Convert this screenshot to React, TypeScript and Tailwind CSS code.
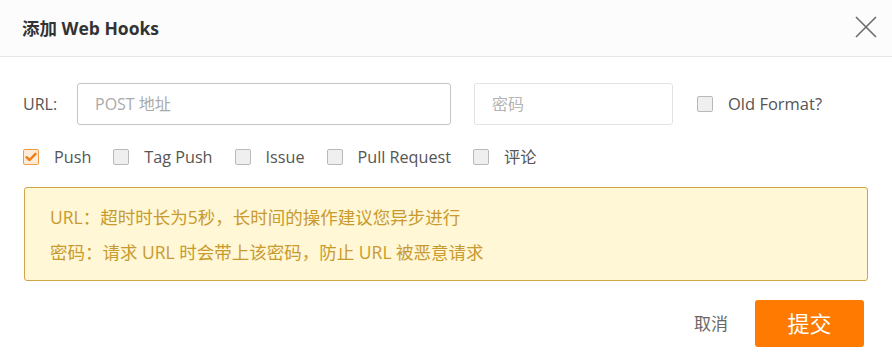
import React from "react"

const font = { fontFamily: '"Open Sans", "Noto Sans CJK SC", sans-serif' }

function Box({ checked }: { checked?: boolean }) {
  if (checked) {
    return (
      <span className="flex h-[16px] w-[16px] shrink-0 items-center justify-center rounded-[2px] border border-[#f39b45] bg-[#fdebd9]">
        <svg width="12" height="10" viewBox="0 0 12 10" fill="none">
          <path d="M1.5 5.2 L4.6 8 L10.5 1.8" stroke="#f07c12" strokeWidth="2.4" strokeLinecap="round" strokeLinejoin="round" />
        </svg>
      </span>
    )
  }
  return <span className="h-[16px] w-[16px] shrink-0 rounded-[2px] border border-[#b9b9b9] bg-[#efefef]" />
}

function Check({ label, checked }: { label: string; checked?: boolean }) {
  return (
    <label className="mr-[22px] flex items-center">
      <Box checked={checked} />
      <span className="ml-[15px] text-[16.2px] leading-[24px] text-[#555]">{label}</span>
    </label>
  )
}

export default function App() {
  return (
    <div className="h-[363px] w-[892px] overflow-hidden bg-white" style={font}>
      {/* Header */}
      <div className="flex h-[57px] items-center justify-between border-b border-[#e6e6e6] bg-[#fcfcfc] pl-[22px] pr-[15px]">
        <h2 className="text-[17.5px] font-bold text-[#333]">添加 Web Hooks</h2>
        <svg width="22" height="22" viewBox="0 0 22 22" className="mb-[2px]">
          <path d="M1 1 L21 21 M21 1 L1 21" stroke="#6b6b6b" strokeWidth="1.6" />
        </svg>
      </div>

      <div className="px-[24px]">
        {/* URL row */}
        <div className="mt-[26px] flex items-center">
          <span className="-ml-px w-[54px] text-[16px] text-[#555]">URL:</span>
          <div className="flex h-[42px] w-[374px] items-center rounded-[3px] border border-[#c4c4c4] pl-[17px] text-[16px] text-[#aaa]">
            POST 地址
          </div>
          <div className="ml-[23px] flex h-[42px] w-[199px] items-center rounded-[3px] border border-[#e3e3e3] pl-[17px] text-[16px] text-[#b3b3b3]">
            密码
          </div>
          <label className="ml-[24px] flex items-center">
            <Box />
            <span className="ml-[15px] text-[16.5px] text-[#555]">Old Format?</span>
          </label>
        </div>

        {/* Event checkboxes */}
        <div className="-ml-px mt-[20px] flex items-center">
          <Check label="Push" checked />
          <Check label="Tag Push" />
          <Check label="Issue" />
          <Check label="Pull Request" />
          <Check label="评论" />
        </div>

        {/* Notice */}
        <div className="mt-[18px] flex h-[94px] flex-col justify-center gap-[11px] rounded-[3px] border border-[#cfa646] bg-[#fff7d6] pl-[25px] text-[17.5px] leading-[24px] text-[#c99a2e]">
          <p>URL：超时时长为5秒，长时间的操作建议您异步进行</p>
          <p>密码：请求 URL 时会带上该密码，防止 URL 被恶意请求</p>
        </div>

        {/* Footer */}
        <div className="mt-[19px] flex items-center justify-end pr-[4px]">
          <button className="text-[17px] text-[#666]">取消</button>
          <button className="ml-[27px] h-[47px] w-[109px] rounded-[3px] bg-[#ff7a00] text-[22px] text-white">提交</button>
        </div>
      </div>
    </div>
  )
}
